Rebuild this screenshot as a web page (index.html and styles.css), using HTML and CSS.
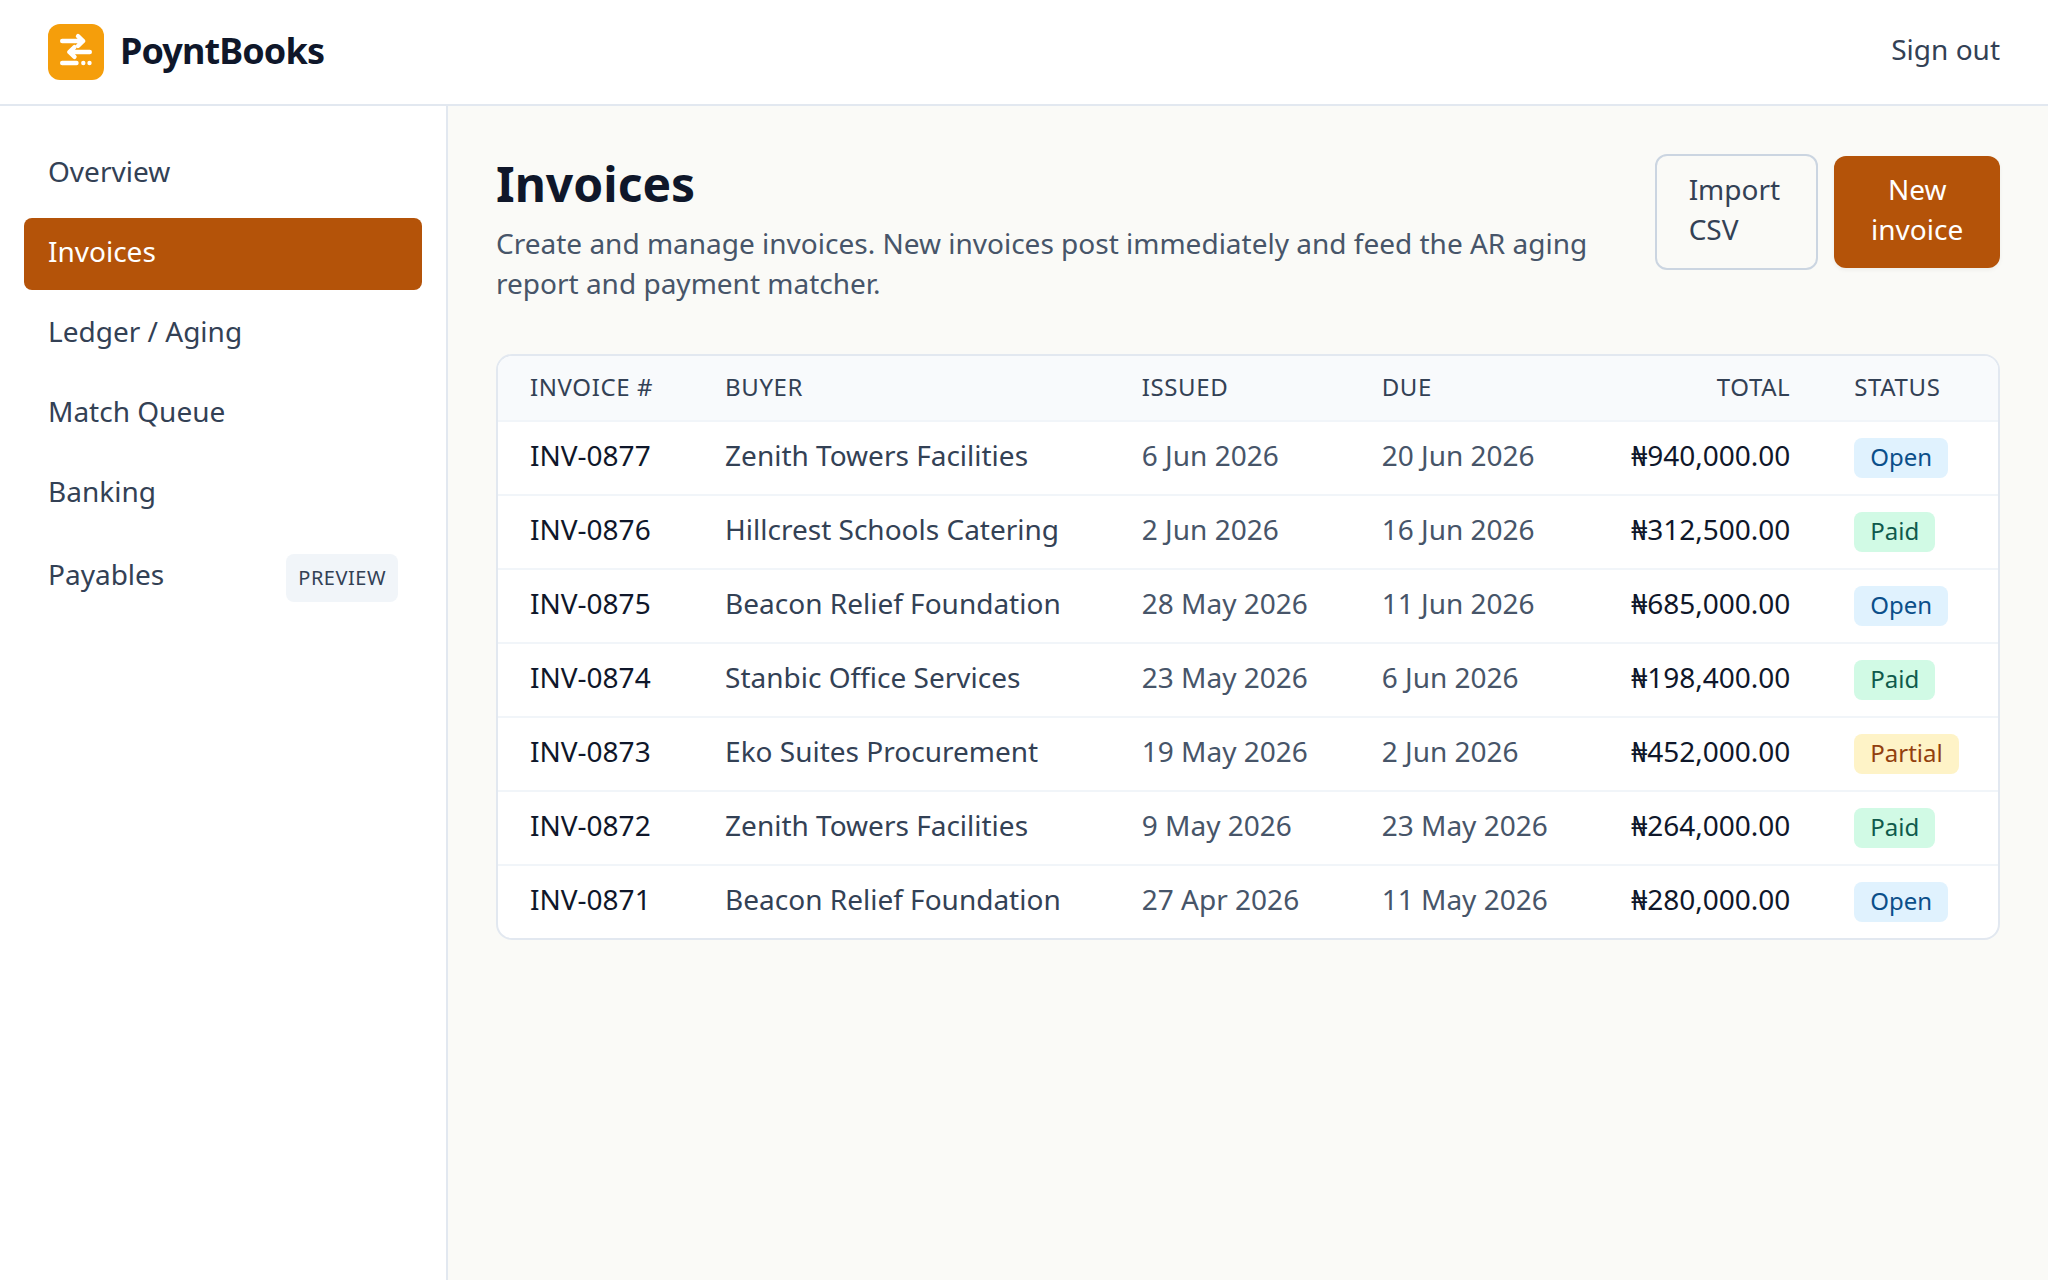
FILE: index.html
```html
<!DOCTYPE html>
<html lang="en">
<head>
    <meta charset="UTF-8">
    <meta name="viewport" content="width=device-width, initial-scale=1.0">
    <title>Invoices - PoyntBooks</title>
    <link rel="stylesheet" href="styles.css">
</head>
<body>
    <header class="topbar">
        <a class="brand" href="#">
            <svg class="brand-logo" viewBox="0 0 56 56" aria-hidden="true">
                <rect width="56" height="56" rx="12" fill="#f59e0b"/>
                <g fill="none" stroke="#fff" stroke-width="4.400" stroke-linecap="round" stroke-linejoin="round">
                    <path d="M14.200 17H35M30 12.200l5.200 4.800-5.200 4.800"/>
                    <path d="M41.800 28H21.500M26.500 23.200L21.300 28l5.200 4.800"/>
                    <path d="M14.200 39h14.300"/>
                </g>
                <circle cx="35.300" cy="39" r="2.200" fill="#fff"/>
                <circle cx="41.500" cy="39" r="2.200" fill="#fff"/>
            </svg>
            <span class="brand-name">PoyntBooks</span>
        </a>
        <button type="button" class="sign-out">Sign out</button>
    </header>

    <div class="layout">
        <nav class="sidebar">
            <a class="nav-link" href="#">Overview</a>
            <a class="nav-link active" href="#" aria-current="page">Invoices</a>
            <a class="nav-link" href="#">Ledger / Aging</a>
            <a class="nav-link" href="#">Match Queue</a>
            <a class="nav-link" href="#">Banking</a>
            <a class="nav-link with-tag" href="#">Payables <span class="preview">Preview</span></a>
        </nav>

        <main class="content">
            <div class="page-head">
                <div>
                    <h1>Invoices</h1>
                    <p class="intro">Create and manage invoices. New invoices post immediately and feed the AR aging report and payment matcher.</p>
                </div>
                <div class="actions">
                    <a class="btn btn-outline" href="#">Import CSV</a>
                    <button type="button" class="btn btn-primary">New invoice</button>
                </div>
            </div>

            <div class="card">
                <table class="invoices">
                    <thead>
                        <tr>
                            <th>Invoice #</th>
                            <th>Buyer</th>
                            <th>Issued</th>
                            <th>Due</th>
                            <th class="total">Total</th>
                            <th>Status</th>
                        </tr>
                    </thead>
                    <tbody>
                        <tr>
                            <td class="number">INV-0877</td>
                            <td class="buyer">Zenith Towers Facilities</td>
                            <td>6 Jun 2026</td>
                            <td>20 Jun 2026</td>
                            <td class="total">₦940,000.00</td>
                            <td class="status"><span class="badge open">Open</span></td>
                        </tr>
                        <tr>
                            <td class="number">INV-0876</td>
                            <td class="buyer">Hillcrest Schools Catering</td>
                            <td>2 Jun 2026</td>
                            <td>16 Jun 2026</td>
                            <td class="total">₦312,500.00</td>
                            <td class="status"><span class="badge paid">Paid</span></td>
                        </tr>
                        <tr>
                            <td class="number">INV-0875</td>
                            <td class="buyer">Beacon Relief Foundation</td>
                            <td>28 May 2026</td>
                            <td>11 Jun 2026</td>
                            <td class="total">₦685,000.00</td>
                            <td class="status"><span class="badge open">Open</span></td>
                        </tr>
                        <tr>
                            <td class="number">INV-0874</td>
                            <td class="buyer">Stanbic Office Services</td>
                            <td>23 May 2026</td>
                            <td>6 Jun 2026</td>
                            <td class="total">₦198,400.00</td>
                            <td class="status"><span class="badge paid">Paid</span></td>
                        </tr>
                        <tr>
                            <td class="number">INV-0873</td>
                            <td class="buyer">Eko Suites Procurement</td>
                            <td>19 May 2026</td>
                            <td>2 Jun 2026</td>
                            <td class="total">₦452,000.00</td>
                            <td class="status"><span class="badge partial">Partial</span></td>
                        </tr>
                        <tr>
                            <td class="number">INV-0872</td>
                            <td class="buyer">Zenith Towers Facilities</td>
                            <td>9 May 2026</td>
                            <td>23 May 2026</td>
                            <td class="total">₦264,000.00</td>
                            <td class="status"><span class="badge paid">Paid</span></td>
                        </tr>
                        <tr>
                            <td class="number">INV-0871</td>
                            <td class="buyer">Beacon Relief Foundation</td>
                            <td>27 Apr 2026</td>
                            <td>11 May 2026</td>
                            <td class="total">₦280,000.00</td>
                            <td class="status"><span class="badge open">Open</span></td>
                        </tr>
                    </tbody>
                </table>
            </div>
        </main>
    </div>
</body>
</html>
```
FILE: styles.css
```css
* {
    box-sizing: border-box;
}

body {
    display: flex;
    flex-direction: column;
    min-height: 100vh;
    margin: 0;
    font-family: 'Noto Sans', sans-serif;
    font-size: 28px;
    line-height: 40px;
    color: #334155;
    background-color: #fafaf7;
}

a {
    color: inherit;
    text-decoration: none;
}

button {
    font: inherit;
    color: inherit;
    border: none;
    cursor: pointer;
}

.topbar {
    display: flex;
    align-items: center;
    justify-content: space-between;
    padding: 24px 48px;
    background-color: #fff;
    border-bottom: 2px solid #e2e8f0;
}

.brand {
    display: flex;
    align-items: center;
    gap: 16px;
}

.brand-logo {
    width: 56px;
    height: 56px;
}

.brand-name {
    padding-bottom: 2px;
    font-size: 36px;
    font-weight: 700;
    letter-spacing: -0.025em;
    color: #0f172a;
}

.sign-out {
    padding: 0 0 6px;
    background: none;
}

.layout {
    display: flex;
    flex: 1;
}

.sidebar {
    display: flex;
    flex-direction: column;
    flex: none;
    gap: 8px;
    width: 448px;
    padding: 32px 24px;
    background-color: #fff;
    border-right: 2px solid #e2e8f0;
}

.nav-link {
    display: flex;
    align-items: center;
    justify-content: space-between;
    padding: 13px 24px 19px;
    border-radius: 8px;
}

.nav-link.active {
    color: #fff;
    background-color: #b45309;
}

.nav-link.with-tag {
    align-items: baseline;
    padding: 16px 24px;
}

.preview {
    padding: 4px 12px;
    font-size: 20px;
    letter-spacing: 0.025em;
    text-transform: uppercase;
    background-color: #f1f5f9;
    border-radius: 8px;
}

.content {
    flex: 1;
    min-width: 0;
    padding: 48px;
}

.page-head {
    display: flex;
    align-items: flex-start;
    justify-content: space-between;
    gap: 32px;
    margin-bottom: 48px;
}

h1 {
    margin: 0;
    font-size: 48px;
    font-weight: 700;
    line-height: 60px;
    color: #0f172a;
}

.intro {
    margin: 9px 0 3px;
    color: #475569;
}

.actions {
    display: flex;
    align-items: center;
    gap: 16px;
}

.btn {
    padding: 13px 32px 19px;
    border-radius: 12px;
}

.btn-outline {
    border: 2px solid #cbd5e1;
}

.btn-primary {
    color: #fff;
    background-color: #b45309;
    box-shadow: 0 2px 4px rgba(0, 0, 0, 0.05);
}

.card {
    overflow: hidden;
    background-color: #fff;
    border: 2px solid #e2e8f0;
    border-radius: 16px;
}

.invoices {
    width: 100%;
    border-collapse: collapse;
}

.invoices th {
    padding: 15px 32px 17px;
    font-size: 24px;
    font-weight: 400;
    line-height: 32px;
    letter-spacing: 0.025em;
    text-align: left;
    text-transform: uppercase;
    background-color: #f8fafc;
}

.invoices td {
    padding: 13px 32px 19px;
    color: #475569;
    border-top: 2px solid #f1f5f9;
}

.invoices td.number {
    color: #0f172a;
}

.invoices td.buyer {
    color: #334155;
}

.invoices td.status {
    padding: 16px 32px;
}

.invoices .total {
    text-align: right;
}

.invoices td.total {
    color: #0f172a;
}

.badge {
    display: block;
    width: fit-content;
    padding: 3px 16px 5px;
    font-size: 24px;
    line-height: 32px;
    border-radius: 8px;
}

.badge.open {
    color: #0b4f8a;
    background-color: #e0f2fe;
}

.badge.paid {
    color: #0f5a4c;
    background-color: #d1fae5;
}

.badge.partial {
    color: #92400e;
    background-color: #fef3c7;
}
```
